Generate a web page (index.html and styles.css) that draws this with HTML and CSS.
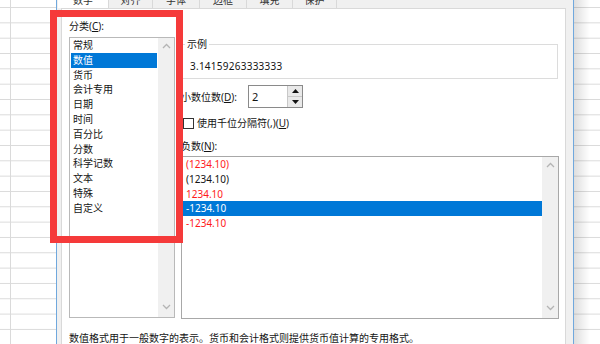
FILE: index.html
```html
<!DOCTYPE html>
<html lang="zh-CN">
<head>
  <meta charset="UTF-8">
  <title>设置单元格格式 – 数字</title>
  <link rel="stylesheet" href="styles.css">
</head>
<body>
  <div class="screen">
    <div class="sheet sheet-left"></div>

    <div class="dialog">
      <div class="tabs">
        <div class="tab active"><span>数字</span></div>
        <div class="tab w44"><span>对齐</span></div>
        <div class="tab w47"><span>字体</span></div>
        <div class="tab w47"><span>边框</span></div>
        <div class="tab w46"><span>填充</span></div>
        <div class="tab w44"><span>保护</span></div>
      </div>

      <div class="page">
        <div class="page-body">
          <!-- 分类 -->
          <div class="col-category">
            <div class="label">分类(<u>C</u>):</div>
            <div class="listbox category-list">
              <ul class="items">
                <li>常规</li>
                <li class="selected">数值</li>
                <li>货币</li>
                <li>会计专用</li>
                <li>日期</li>
                <li>时间</li>
                <li>百分比</li>
                <li>分数</li>
                <li>科学记数</li>
                <li>文本</li>
                <li>特殊</li>
                <li>自定义</li>
              </ul>
              <div class="scrollbar">
                <svg width="9" height="6" viewBox="0 0 9 6"><path d="M1 5 L4.5 1.5 L8 5" fill="none" stroke="#b4b4b4" stroke-width="1.3"/></svg>
                <svg width="9" height="6" viewBox="0 0 9 6"><path d="M1 1 L4.5 4.5 L8 1" fill="none" stroke="#b4b4b4" stroke-width="1.3"/></svg>
              </div>
            </div>
          </div>

          <!-- 选项 -->
          <div class="col-options">
            <fieldset class="sample">
              <legend>示例</legend>
              <div class="sample-value">3.14159263333333</div>
            </fieldset>

            <div class="row decimals">
              <span class="row-label">小数位数(<u>D</u>):</span>
              <div class="spin">
                <span class="spin-value">2</span>
                <div class="spin-btns">
                  <span><svg width="7" height="4" viewBox="0 0 7 4"><polygon points="0,4 3.5,0 7,4" fill="#111"/></svg></span>
                  <span><svg width="7" height="4" viewBox="0 0 7 4"><polygon points="0,0 3.5,4 7,0" fill="#111"/></svg></span>
                </div>
              </div>
            </div>

            <div class="row check">
              <span class="checkbox"></span>
              <span>使用千位分隔符(,)(<u>U</u>)</span>
            </div>

            <div class="label neg-label">负数(<u>N</u>):</div>
            <div class="listbox negative-list">
              <ul class="items">
                <li class="red">(1234.10)</li>
                <li>(1234.10)</li>
                <li class="red">1234.10</li>
                <li class="selected">-1234.10</li>
                <li class="red">-1234.10</li>
              </ul>
              <div class="scrollbar">
                <svg width="9" height="6" viewBox="0 0 9 6"><path d="M1 5 L4.5 1.5 L8 5" fill="none" stroke="#b4b4b4" stroke-width="1.3"/></svg>
                <svg width="9" height="6" viewBox="0 0 9 6"><path d="M1 1 L4.5 4.5 L8 1" fill="none" stroke="#b4b4b4" stroke-width="1.3"/></svg>
              </div>
            </div>
          </div>
        </div>

        <p class="desc">数值格式用于一般数字的表示。货币和会计格式则提供货币值计算的专用格式。</p>
      </div>
    </div>

    <div class="sheet sheet-right"></div>

    <!-- Annotation rouge -->
    <div class="mark"></div>
  </div>
</body>
</html>
```

FILE: styles.css
```css
body {
  margin: 0;
  font-family: "Noto Sans", "Noto Sans CJK SC", sans-serif;
  font-size: 10px;
  color: #141414;
  background: #fff;
}
.screen {
  position: relative;
  display: flex;
  width: 600px;
  height: 344px;
  overflow: clip;
}

/* Feuille Excel */
.sheet {
  background-color: #fff;
}
.sheet-left {
  width: 56px;
  flex: none;
  background-image:
    linear-gradient(90deg, transparent 10px, #dadada 10px, #dadada 11px, transparent 11px),
    linear-gradient(180deg, transparent 14.33px, #dadada 14.33px);
  background-size: 100% 100%, 100% 15.33px;
  background-position: 0 0, 0 -7.33px;
  background-repeat: no-repeat, repeat-y;
}
.sheet-right {
  flex: 1;
  background-image:
    linear-gradient(90deg, rgba(0, 0, 0, 0.13), rgba(0, 0, 0, 0) 16px),
    linear-gradient(180deg, transparent 14.33px, #dadada 14.33px);
  background-size: 100% 100%, 100% 15.33px;
  background-position: 0 0, 0 -7.33px;
  background-repeat: no-repeat, repeat-y;
}

/* Boîte de dialogue */
.dialog {
  width: 518px;
  height: 344px;
  flex: none;
  box-sizing: border-box;
  border-left: 1px solid #70a8dd;
  border-right: 1px solid #70a8dd;
  background: #f0f0f0;
  display: flex;
  flex-direction: column;
  overflow: clip;
}
.tabs {
  display: flex;
  height: 8px;
  flex: none;
  margin-left: 1px;
  overflow: clip;
}
.tab {
  width: 51px;
  box-sizing: border-box;
  border-right: 1px solid #d9d9d9;
  text-align: center;
  color: #333;
}
.tab span {
  display: block;
  line-height: 14px;
  margin-top: -7px;
}
.tab.active {
  background: #fff;
}
.w44 { width: 44px; }
.w46 { width: 46px; }
.w47 { width: 47px; }

.page {
  flex: 1;
  min-height: 0;
  margin: 0 7px 0 4px;
  border: 1px solid #d9d9d9;
  border-bottom: none;
  background: #fff;
  overflow: clip;
}
.page-body {
  display: flex;
  gap: 6px;
  padding: 10px 0 0 7px;
}
.label {
  line-height: 14px;
}

/* Listes */
.listbox {
  display: flex;
  border: 1px solid #b9b9b9;
  box-sizing: border-box;
}
.items {
  flex: 1;
  list-style: none;
  margin: 0;
  padding: 0;
}
.items li {
  line-height: 14.8px;
  padding-left: 2px;
  white-space: nowrap;
}
.items li.selected {
  background: #0078d7;
  color: #fff;
}
.items li.red {
  color: #ff1a1a;
}
.scrollbar {
  width: 16px;
  flex: none;
  background: #f0f0f0;
  display: flex;
  flex-direction: column;
  justify-content: space-between;
  align-items: center;
  padding: 5px 0 7px;
}

.col-category {
  width: 106px;
  flex: none;
}
.category-list {
  margin-top: 4px;
  height: 281px;
}
.category-list .items {
  padding: 0 1px;
}

.col-options {
  width: 378px;
  flex: none;
}
.sample {
  margin: 18px 1px 0 0;
  padding: 8px 0 5px 8px;
  border: 1px solid #dcdcdc;
}
.sample legend {
  margin-left: -5px;
  padding: 0 2px;
  line-height: 14px;
}
.sample-value {
  line-height: 14px;
  letter-spacing: 0.25px;
}

.row {
  display: flex;
  align-items: center;
}
.decimals {
  margin-top: 6px;
}
.row-label {
  width: 67px;
}
.spin {
  display: flex;
  width: 55px;
  height: 23px;
  box-sizing: border-box;
  border: 1px solid #8a8a8a;
}
.spin-value {
  flex: 1;
  padding-left: 3px;
  line-height: 21px;
  font-size: 11px;
}
.spin-btns {
  width: 14px;
  display: flex;
  flex-direction: column;
  border-left: 1px solid #c8c8c8;
}
.spin-btns span {
  flex: 1;
  display: flex;
  align-items: center;
  justify-content: center;
  background: #e9e9e9;
}
.spin-btns span + span {
  border-top: 1px solid #c8c8c8;
}

.check {
  margin-top: 8px;
  line-height: 14px;
  gap: 3px;
}
.checkbox {
  width: 11px;
  height: 11px;
  box-sizing: border-box;
  margin-left: 2px;
  border: 1px solid #333;
}
.neg-label {
  margin-top: 9px;
}
.negative-list {
  margin-top: 3px;
  height: 163px;
  border-color: #a8a8a8;
}
.negative-list .items li {
  padding-left: 4px;
}

.desc {
  margin: 12px 0 0 7px;
  line-height: 15px;
  white-space: nowrap;
}

/* Cadre rouge */
.mark {
  position: absolute;
  left: 50px;
  top: 10px;
  width: 133px;
  height: 233px;
  box-sizing: border-box;
  border: 7px solid #f53a3a;
}
```
